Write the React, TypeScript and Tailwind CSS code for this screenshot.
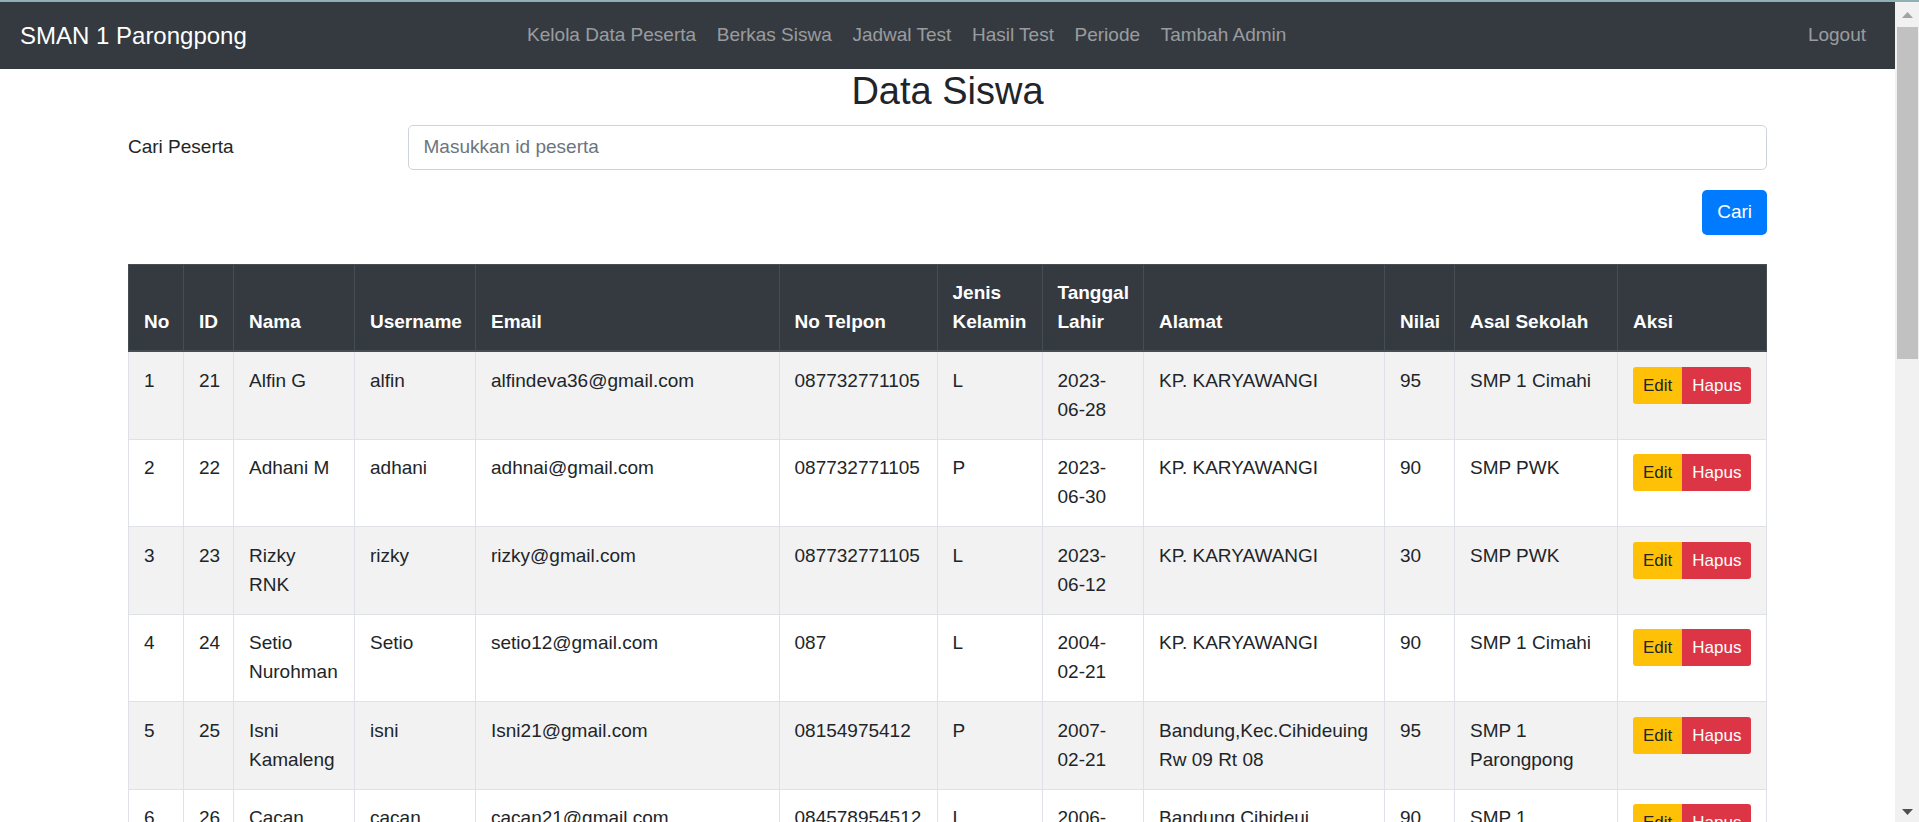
import React from "react";

interface Siswa {
  no: number;
  id: number;
  nama: string;
  username: string;
  email: string;
  telpon: string;
  jk: string;
  lahir: string;
  alamat: string;
  nilai: number;
  sekolah: string;
}

const siswa: Siswa[] = [
  { no: 1, id: 21, nama: "Alfin G", username: "alfin", email: "alfindeva36@gmail.com", telpon: "087732771105", jk: "L", lahir: "2023-06-28", alamat: "KP. KARYAWANGI", nilai: 95, sekolah: "SMP 1 Cimahi" },
  { no: 2, id: 22, nama: "Adhani M", username: "adhani", email: "adhnai@gmail.com", telpon: "087732771105", jk: "P", lahir: "2023-06-30", alamat: "KP. KARYAWANGI", nilai: 90, sekolah: "SMP PWK" },
  { no: 3, id: 23, nama: "Rizky RNK", username: "rizky", email: "rizky@gmail.com", telpon: "087732771105", jk: "L", lahir: "2023-06-12", alamat: "KP. KARYAWANGI", nilai: 30, sekolah: "SMP PWK" },
  { no: 4, id: 24, nama: "Setio Nurohman", username: "Setio", email: "setio12@gmail.com", telpon: "087", jk: "L", lahir: "2004-02-21", alamat: "KP. KARYAWANGI", nilai: 90, sekolah: "SMP 1 Cimahi" },
  { no: 5, id: 25, nama: "Isni Kamaleng", username: "isni", email: "Isni21@gmail.com", telpon: "08154975412", jk: "P", lahir: "2007-02-21", alamat: "Bandung,Kec.Cihideuing Rw 09 Rt 08", nilai: 95, sekolah: "SMP 1 Parongpong" },
  { no: 6, id: 26, nama: "Cacan Maulana", username: "cacan", email: "cacan21@gmail.com", telpon: "084578954512", jk: "L", lahir: "2006-03-15", alamat: "Bandung,Cihideui Parongpong", nilai: 90, sekolah: "SMP 1 Parongpong" },
];

const menu = ["Kelola Data Peserta", "Berkas Siswa", "Jadwal Test", "Hasil Test", "Periode", "Tambah Admin"];

const th = "border border-[#454d55] border-b-2 px-[15px] py-[14px] text-left align-bottom font-bold";
const td = "border border-[#dee2e6] px-[15px] py-[14.5px] align-top";

function Navbar() {
  return (
    <nav className="h-[67px] bg-[#343a40] flex items-center pl-[20px] pr-[19px]">
      <span className="text-[24px] text-white">SMAN 1 Parongpong</span>
      <ul className="flex ml-[270px]">
        {menu.map((m) => (
          <li key={m} className="px-[10.3px] text-[19px] text-white/50">{m}</li>
        ))}
      </ul>
      <span className="ml-auto px-[10px] text-[19px] text-white/50">Logout</span>
    </nav>
  );
}

function Scrollbar() {
  return (
    <div className="w-[24px] bg-[#f1f1f1] flex flex-col">
      <div className="h-[25px] flex items-center justify-center">
        <svg width="11" height="6" viewBox="0 0 11 6"><polygon points="5.5,0 11,6 0,6" fill="#a3a3a3" /></svg>
      </div>
      <div className="h-[332px] ml-[2px] w-[21px] bg-[#c1c1c1]" />
      <div className="flex-1" />
      <div className="h-[20px] flex items-center justify-center">
        <svg width="11" height="6" viewBox="0 0 11 6"><polygon points="0,0 11,0 5.5,6" fill="#505050" /></svg>
      </div>
    </div>
  );
}

export default function App() {
  return (
    <div className="h-[822px] overflow-hidden flex flex-col bg-white text-[#212529] font-['Liberation_Sans',Arial,sans-serif]">
      <div className="h-[2px] bg-[#8db1b4]" />
      <div className="flex flex-1 min-h-0">
        <main className="flex-1 min-w-0 overflow-hidden">
          <Navbar />
          <h1 className="text-[38px] leading-[45.6px] text-center font-normal">Data Siswa</h1>
          <div className="px-[128px]">
            <div className="flex items-center mt-[10.4px]">
              <label className="w-[279.5px] text-[19px]">Cari Peserta</label>
              <input
                className="flex-1 h-[45px] border border-[#ced4da] rounded-[5px] px-[15px] text-[19px] placeholder:text-[#6c757d] outline-none"
                placeholder="Masukkan id peserta"
              />
            </div>
            <div className="flex justify-end mt-[20px]">
              <button className="h-[45px] px-[15px] bg-[#007bff] text-white text-[19px] rounded-[5px]">Cari</button>
            </div>
            <table className="mt-[29px] w-full table-fixed border-collapse text-[19px] leading-[28.75px]">
              <thead className="bg-[#343a40] text-white">
                <tr>
                  <th className={`${th} w-[55px]`}>No</th>
                  <th className={`${th} w-[50px]`}>ID</th>
                  <th className={`${th} w-[121px]`}>Nama</th>
                  <th className={`${th} w-[121px]`}>Username</th>
                  <th className={`${th} w-[303.5px]`}>Email</th>
                  <th className={`${th} w-[158px]`}>No Telpon</th>
                  <th className={`${th} w-[105px]`}>Jenis Kelamin</th>
                  <th className={`${th} w-[101.5px]`}>Tanggal Lahir</th>
                  <th className={`${th} w-[241px]`}>Alamat</th>
                  <th className={`${th} w-[70px]`}>Nilai</th>
                  <th className={`${th} w-[163px]`}>Asal Sekolah</th>
                  <th className={`${th}`}>Aksi</th>
                </tr>
              </thead>
              <tbody>
                {siswa.map((s) => (
                  <tr key={s.id} className={s.no % 2 === 1 ? "bg-[#f2f2f2]" : "bg-white"}>
                    <td className={td}>{s.no}</td>
                    <td className={td}>{s.id}</td>
                    <td className={td}>{s.nama}</td>
                    <td className={td}>{s.username}</td>
                    <td className={td}>{s.email}</td>
                    <td className={td}>{s.telpon}</td>
                    <td className={td}>{s.jk}</td>
                    <td className={td}>{s.lahir}</td>
                    <td className={td}>{s.alamat}</td>
                    <td className={td}>{s.nilai}</td>
                    <td className={td}>{s.sekolah}</td>
                    <td className={td}>
                      <div className="flex text-[17px] leading-[25.5px]">
                        <button className="h-[37px] px-[10px] bg-[#ffc107] text-[#212529] rounded-l-[3px]">Edit</button>
                        <button className="h-[37px] px-[10px] bg-[#dc3545] text-white rounded-r-[3px]">Hapus</button>
                      </div>
                    </td>
                  </tr>
                ))}
              </tbody>
            </table>
          </div>
        </main>
        <Scrollbar />
      </div>
    </div>
  );
}
